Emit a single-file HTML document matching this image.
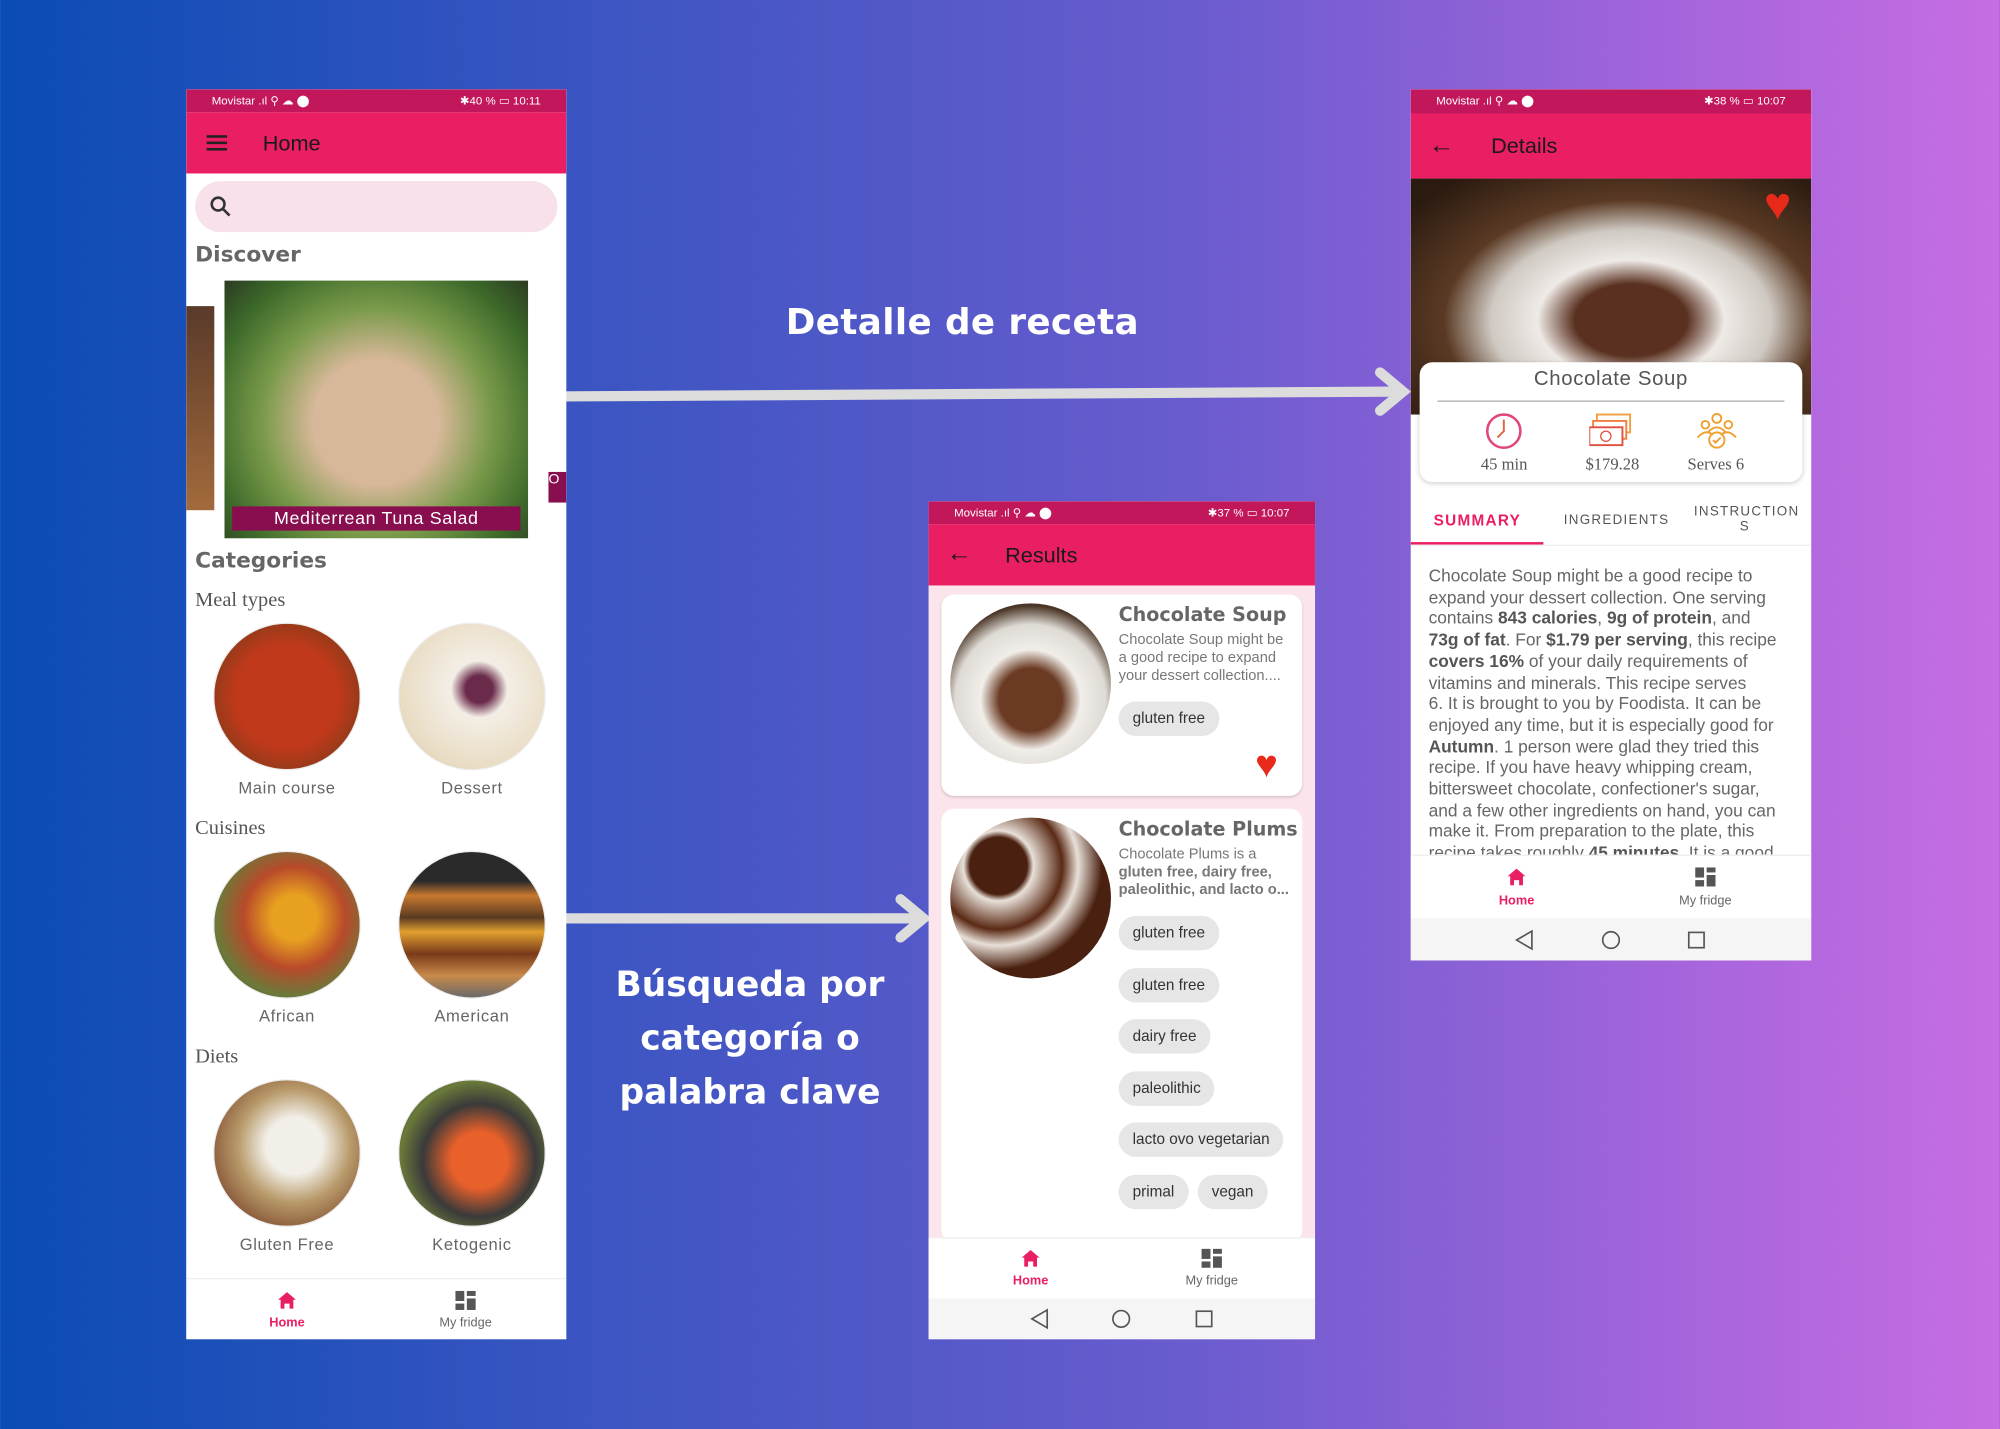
<!DOCTYPE html>
<html><head><meta charset="utf-8"><style>
*{margin:0;padding:0;box-sizing:border-box}
html,body{width:2000px;height:1428px;overflow:hidden}
body{font-family:"Liberation Sans",sans-serif;background:linear-gradient(90deg,#0a4cb4 0%,#3c55c2 30%,#6a5ccf 60%,#a865dc 85%,#c66de3 100%)}
#w{position:absolute;left:0;top:0;width:1568px;height:1120px;transform:scale(1.27551);transform-origin:0 0}
.a{position:absolute}
.sb{background:#c2185b;color:#fff;font-size:9px;padding-left:20px;line-height:18px}
.sb span{position:absolute;right:20px;top:0}
.ab{background:#e91e63;color:#1a1a1a;font-size:17px;font-weight:500}
.h{color:#666;font-family:"DejaVu Sans",sans-serif;font-weight:bold;font-size:17px}
.sub{color:#555;font-family:"Liberation Serif",serif;font-size:16px}
.cl{border-radius:50%;width:116px;height:116px;border:1px solid #eee}
.lab{color:#666;font-size:13px;letter-spacing:.5px;text-align:center;width:140px}
.chip{background:#e6e6e6;border-radius:14px;font-size:12px;color:#333;padding:0 11px;line-height:27px;height:27px}
.nav{font-size:10px;text-align:center;color:#666}
.home{color:#e91e63;font-weight:bold}
.sum{font-size:13.6px;color:#666;line-height:16.7px;white-space:nowrap}
.sum b{color:#555}
</style></head><body><div id="w">
<div class="a" style="left:616px;top:236px;color:#fff;font-weight:bold;font-size:28px;letter-spacing:.3px;font-family:'DejaVu Sans',sans-serif">Detalle de receta</div>
<div class="a" style="left:440px;top:752px;width:296px;text-align:center;color:#fff;font-weight:bold;font-size:27px;line-height:42px;font-family:'DejaVu Sans',sans-serif">Búsqueda por categoría o palabra clave</div>
<svg class="a" style="left:0;top:0" width="1568" height="1120"><g stroke="#dcdcdc" stroke-width="8" fill="none" stroke-linecap="round"><path d="M400 311 L1098 307"/><path d="M1082 292 L1100 307 L1082 322"/><path d="M444 720 L722 720"/><path d="M706 705 L724 720 L706 735"/></g></svg>

<!-- Phone 1 -->
<div class="a" style="left:146px;top:70px;width:298px;height:980px;background:#fff;overflow:hidden">
 <div class="a sb" style="left:0;top:0;width:298px;height:18px">Movistar .ıl ⚲ ☁ ⬤ <span>✱40 % ▭ 10:11</span></div>
 <div class="a ab" style="left:0;top:18px;width:298px;height:48px"><div class="a" style="left:16px;top:18px;width:16px;height:2px;background:#222;box-shadow:0 5px #222,0 10px #222"></div><div class="a" style="left:60px;top:15px">Home</div></div>
 <div class="a" style="left:7px;top:72px;width:284px;height:40px;border-radius:20px;background:#f8e1ea"><svg class="a" style="left:11px;top:11px" width="18" height="18"><circle cx="7" cy="7" r="5" stroke="#333" stroke-width="2" fill="none"/><path d="M11 11 L16 16" stroke="#333" stroke-width="2"/></svg></div>
 <div class="a h" style="left:7px;top:120px">Discover</div>
 <div class="a" style="left:0;top:170px;width:22px;height:160px;background:linear-gradient(#5a3a2a,#a36a3c)"></div>
 <div class="a" style="left:30px;top:150px;width:238px;height:202px;background:radial-gradient(circle at 50% 55%,#d8b89a 0 30%,#7a9a4a 55%,#3d6a2a 80%,#2b3b22)"></div>
 <div class="a" style="left:36px;top:327px;width:226px;height:19px;background:#880e4f;color:#fff;text-align:center;font-size:14px;line-height:19px;letter-spacing:.5px">Mediterrean Tuna Salad</div>
 <div class="a" style="left:284px;top:300px;width:14px;height:24px;background:#880e4f;color:#fff;font-size:11px">O</div>
 <div class="a h" style="left:7px;top:360px">Categories</div>
 <div class="a sub" style="left:7px;top:392px">Meal types</div>
 <div class="a cl" style="left:21px;top:418px;background:radial-gradient(circle,#c0391b 0 50%,#9a3a1a 70%,#d9b98a 75%,#7a5a3a)"></div>
 <div class="a cl" style="left:166px;top:418px;background:radial-gradient(circle at 55% 45%,#6a2a4a 0 12%,#f3eee6 25%,#e9dcc3 70%,#b8a58a)"></div>
 <div class="a lab" style="left:9px;top:540px">Main course</div><div class="a lab" style="left:154px;top:540px">Dessert</div>
 <div class="a sub" style="left:7px;top:571px">Cuisines</div>
 <div class="a cl" style="left:21px;top:597px;background:radial-gradient(circle at 55% 45%,#e8a020 0 20%,#b84a2a 45%,#6a7a3a 70%,#3a2a1a)"></div>
 <div class="a cl" style="left:166px;top:597px;background:linear-gradient(#2a2a2a 0 20%,#c7782e 30%,#5a3a22 45%,#e0a030 55%,#7a3a1a 70%,#c88a4a 85%,#6a6a6a)"></div>
 <div class="a lab" style="left:9px;top:719px">African</div><div class="a lab" style="left:154px;top:719px">American</div>
 <div class="a sub" style="left:7px;top:750px">Diets</div>
 <div class="a cl" style="left:21px;top:776px;background:radial-gradient(circle at 55% 45%,#f2efe8 0 25%,#b89a6a 50%,#8a5a3a 75%,#5a3a2a)"></div>
 <div class="a cl" style="left:166px;top:776px;background:radial-gradient(circle at 55% 55%,#e8602a 0 25%,#3a3a3a 50%,#6a7a3a 70%,#2a2a2a)"></div>
 <div class="a lab" style="left:9px;top:898px">Gluten Free</div><div class="a lab" style="left:154px;top:898px">Ketogenic</div>
 <div class="a" style="left:0;top:932px;width:298px;height:1px;background:#eee"></div>
 <svg class="a" style="left:71px;top:942px" width="16" height="15"><path d="M8 1 L15 7 H13 V14 H10 V10 H6 V14 H3 V7 H1 Z" fill="#e91e63"/></svg>
 <div class="a nav home" style="left:49px;top:962px;width:60px">Home</div>
 <svg class="a" style="left:211px;top:942px" width="16" height="15"><rect x="0" y="0" width="7" height="8" fill="#555"/><rect x="9" y="0" width="7" height="4" fill="#555"/><rect x="9" y="6" width="7" height="9" fill="#555"/><rect x="0" y="10" width="7" height="5" fill="#555"/></svg>
 <div class="a nav" style="left:189px;top:962px;width:60px">My fridge</div>
</div>

<!-- Phone 2 -->
<div class="a" style="left:728px;top:393px;width:303px;height:657px;background:#fce4ec;overflow:hidden">
 <div class="a sb" style="left:0;top:0;width:303px;height:18px">Movistar .ıl ⚲ ☁ ⬤ <span>✱37 % ▭ 10:07</span></div>
 <div class="a ab" style="left:0;top:18px;width:303px;height:48px"><div class="a" style="left:14px;top:12px;font-size:20px">←</div><div class="a" style="left:60px;top:15px">Results</div></div>
 <div class="a" style="left:10px;top:73px;width:283px;height:158px;background:#fff;border-radius:10px;box-shadow:0 1px 2px rgba(0,0,0,.15)"></div>
 <div class="a" style="left:17px;top:80px;width:126px;height:126px;border-radius:50%;background:radial-gradient(circle at 50% 60%,#6a3a22 0 25%,#f1eeea 40%,#dedad4 60%,#4a3526 75%)"></div>
 <div class="a" style="left:149px;top:80px;font-family:'DejaVu Sans',sans-serif;font-weight:bold;font-size:15px;color:#666">Chocolate Soup</div>
 <div class="a" style="left:149px;top:102px;font-size:11.5px;color:#777;line-height:14px">Chocolate Soup might be<br>a good recipe to expand<br>your dessert collection....</div>
 <div class="a chip" style="left:149px;top:157px">gluten free</div>
 <div class="a" style="left:256px;top:192px;color:#e82a1a;font-size:30px;line-height:30px">♥</div>
 <div class="a" style="left:10px;top:241px;width:283px;height:340px;background:#fff;border-radius:10px"></div>
 <div class="a" style="left:17px;top:248px;width:126px;height:126px;border-radius:50%;background:radial-gradient(circle at 30% 30%,#4a2010 0 18%,#e8e0d8 22%,#5a2a15 40%,#e8e0d8 50%,#4a2010 65%)"></div>
 <div class="a" style="left:149px;top:248px;font-family:'DejaVu Sans',sans-serif;font-weight:bold;font-size:15px;color:#666">Chocolate Plums</div>
 <div class="a" style="left:149px;top:270px;font-size:11.5px;color:#777;line-height:14px">Chocolate Plums is a<br><b>gluten free, dairy free,<br>paleolithic, and lacto o...</b></div>
 <div class="a chip" style="left:149px;top:325px">gluten free</div>
 <div class="a chip" style="left:149px;top:366px">gluten free</div>
 <div class="a chip" style="left:149px;top:406px">dairy free</div>
 <div class="a chip" style="left:149px;top:447px">paleolithic</div>
 <div class="a chip" style="left:149px;top:487px">lacto ovo vegetarian</div>
 <div class="a chip" style="left:149px;top:528px">primal</div>
 <div class="a chip" style="left:211px;top:528px">vegan</div>
 <div class="a" style="left:0;top:577px;width:303px;height:48px;background:#fff;border-top:1px solid #eee"></div>
 <svg class="a" style="left:72px;top:586px" width="16" height="15"><path d="M8 1 L15 7 H13 V14 H10 V10 H6 V14 H3 V7 H1 Z" fill="#e91e63"/></svg>
 <div class="a nav home" style="left:50px;top:606px;width:60px">Home</div>
 <svg class="a" style="left:214px;top:586px" width="16" height="15"><rect x="0" y="0" width="7" height="8" fill="#555"/><rect x="9" y="0" width="7" height="4" fill="#555"/><rect x="9" y="6" width="7" height="9" fill="#555"/><rect x="0" y="10" width="7" height="5" fill="#555"/></svg>
 <div class="a nav" style="left:192px;top:606px;width:60px">My fridge</div>
 <div class="a" style="left:0;top:625px;width:303px;height:32px;background:#f5f5f5"></div>
 <svg class="a" style="left:0;top:625px" width="303" height="32"><g stroke="#555" stroke-width="1.3" fill="none"><path d="M93 9 L81 16 L93 23 Z"/><circle cx="151" cy="16" r="6.5"/><rect x="210" y="10" width="12" height="12"/></g></svg>
</div>

<!-- Phone 3 -->
<div class="a" style="left:1106px;top:70px;width:314px;height:683px;background:#fff;overflow:hidden">
 <div class="a sb" style="left:0;top:0;width:314px;height:19px">Movistar .ıl ⚲ ☁ ⬤ <span>✱38 % ▭ 10:07</span></div>
 <div class="a ab" style="left:0;top:19px;width:314px;height:51px"><div class="a" style="left:14px;top:14px;font-size:20px">←</div><div class="a" style="left:63px;top:16px">Details</div></div>
 <div class="a" style="left:0;top:70px;width:314px;height:185px;background:radial-gradient(ellipse at 55% 60%,#5a3020 0 18%,#eeeae6 30%,#cfc9c2 45%,#5a3a24 60%,#2a1a10 90%)"></div>
 <div class="a" style="left:277px;top:72px;color:#e82a1a;font-size:36px;line-height:36px">♥</div>
 <div class="a" style="left:7px;top:214px;width:300px;height:94px;background:#fff;border-radius:10px;box-shadow:0 1px 4px rgba(0,0,0,.2)"></div>
 <div class="a" style="left:7px;top:219px;width:300px;text-align:center;font-size:16px;color:#555;letter-spacing:.5px">Chocolate Soup</div>
 <div class="a" style="left:21px;top:244px;width:272px;height:1px;background:#aaa"></div>
 <svg class="a" style="left:58px;top:253px" width="30" height="30"><circle cx="15" cy="15" r="13" stroke="#e0487a" stroke-width="2" fill="none"/><path d="M15 6 V15 L10 20" stroke="#e06040" stroke-width="1.5" fill="none"/></svg>
 <svg class="a" style="left:140px;top:253px" width="34" height="30"><rect x="6" y="2" width="26" height="14" stroke="#f0a040" fill="none" stroke-width="1.5"/><rect x="3" y="7" width="26" height="14" stroke="#f08040" fill="#fff" stroke-width="1.5"/><rect x="0" y="12" width="26" height="14" stroke="#e05040" fill="#fff" stroke-width="1.5"/><circle cx="13" cy="19" r="4" stroke="#e05040" fill="none"/></svg>
 <svg class="a" style="left:223px;top:253px" width="34" height="30"><g stroke="#f0a030" stroke-width="1.5" fill="none"><circle cx="17" cy="5" r="3.5"/><circle cx="8" cy="10" r="3"/><circle cx="26" cy="10" r="3"/><path d="M2 20 Q8 13 14 18 M20 18 Q26 13 32 20 M10 16 Q17 8 24 16"/><circle cx="17" cy="22" r="6"/><path d="M14 22 L16 24 L20 20"/></g></svg>
 <div class="a sub" style="left:55px;top:286px;font-size:13px">45 min</div>
 <div class="a sub" style="left:137px;top:286px;font-size:13px">$179.28</div>
 <div class="a sub" style="left:217px;top:286px;font-size:13px">Serves 6</div>
 <div class="a" style="left:18px;top:331px;font-size:12px;font-weight:bold;color:#e91e63;letter-spacing:1px">SUMMARY</div>
 <div class="a" style="left:120px;top:332px;font-size:10.5px;color:#555;letter-spacing:1px">INGREDIENTS</div>
 <div class="a" style="left:222px;top:325px;width:80px;text-align:center;font-size:10.5px;color:#555;letter-spacing:1px;line-height:12px">INSTRUCTION<br>S</div>
 <div class="a" style="left:0;top:355px;width:104px;height:2px;background:#e91e63"></div>
 <div class="a" style="left:0;top:357px;width:314px;height:1px;background:#eee"></div>
 <div class="a sum" style="left:14px;top:374px;height:226px;overflow:hidden">Chocolate Soup might be a good recipe to<br>expand your dessert collection. One serving<br>contains <b>843 calories</b>, <b>9g of protein</b>, and<br><b>73g of fat</b>. For <b>$1.79 per serving</b>, this recipe<br><b>covers 16%</b> of your daily requirements of<br>vitamins and minerals. This recipe serves<br>6. It is brought to you by Foodista. It can be<br>enjoyed any time, but it is especially good for<br><b>Autumn</b>. 1 person were glad they tried this<br>recipe. If you have heavy whipping cream,<br>bittersweet chocolate, confectioner's sugar,<br>and a few other ingredients on hand, you can<br>make it. From preparation to the plate, this<br>recipe takes roughly <b>45 minutes</b>. It is a good</div>
 <div class="a" style="left:0;top:600px;width:314px;height:50px;background:#fff;border-top:1px solid #eee"></div>
 <svg class="a" style="left:75px;top:610px" width="16" height="15"><path d="M8 1 L15 7 H13 V14 H10 V10 H6 V14 H3 V7 H1 Z" fill="#e91e63"/></svg>
 <div class="a nav home" style="left:53px;top:631px;width:60px">Home</div>
 <svg class="a" style="left:223px;top:610px" width="16" height="15"><rect x="0" y="0" width="7" height="8" fill="#555"/><rect x="9" y="0" width="7" height="4" fill="#555"/><rect x="9" y="6" width="7" height="9" fill="#555"/><rect x="0" y="10" width="7" height="5" fill="#555"/></svg>
 <div class="a nav" style="left:201px;top:631px;width:60px">My fridge</div>
 <div class="a" style="left:0;top:650px;width:314px;height:33px;background:#f5f5f5"></div>
 <svg class="a" style="left:0;top:650px" width="314" height="33"><g stroke="#555" stroke-width="1.3" fill="none"><path d="M95 10 L83 17 L95 24 Z"/><circle cx="157" cy="17" r="6.5"/><rect x="218" y="11" width="12" height="12"/></g></svg>
</div>
</div></body></html>
